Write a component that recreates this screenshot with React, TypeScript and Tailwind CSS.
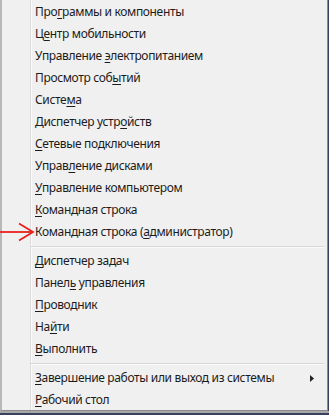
import React from "react";

type Item = { pre: string; key: string; post: string; sub?: boolean };

const group1: Item[] = [
  { pre: "Про", key: "г", post: "раммы и компоненты" },
  { pre: "Ц", key: "е", post: "нтр мобильности" },
  { pre: "Управление ", key: "э", post: "лектропитанием" },
  { pre: "Просмотр соб", key: "ы", post: "тий" },
  { pre: "Систе", key: "м", post: "а" },
  { pre: "Диспетчер устр", key: "о", post: "йств" },
  { pre: "", key: "С", post: "етевые подключения" },
  { pre: "Управ", key: "л", post: "ение дисками" },
  { pre: "", key: "У", post: "правление компьютером" },
  { pre: "", key: "К", post: "омандная строка" },
  { pre: "Командная строка (", key: "а", post: "дминистратор)" },
];
const group2: Item[] = [
  { pre: "", key: "Д", post: "испетчер задач" },
  { pre: "Панел", key: "ь", post: " управления" },
  { pre: "", key: "П", post: "роводник" },
  { pre: "На", key: "й", post: "ти" },
  { pre: "", key: "В", post: "ыполнить" },
];
const group3: Item[] = [
  { pre: "", key: "З", post: "авершение работы или выход из системы", sub: true },
  { pre: "", key: "Р", post: "абочий стол" },
];

function Row({ item }: { item: Item }) {
  return (
    <div className="flex h-[22px] items-center pl-[35px] pr-[12px]">
      <span className="whitespace-pre">
        {item.pre}
        <u className="underline-offset-[2px]">{item.key}</u>
        {item.post}
      </span>
      {item.sub && (
        <svg className="ml-auto mr-[1px]" width="4" height="7" viewBox="0 0 4 7">
          <path d="M0 0 L4 3.5 L0 7 Z" fill="#222" />
        </svg>
      )}
    </div>
  );
}

function Sep() {
  return (
    <div className="flex h-[7px] items-center pl-[31px] pr-[3px]">
      <div className="h-[2px] w-full border-t border-[#d7d7d7] border-b border-b-[#fbfbfb]" />
    </div>
  );
}

export default function App() {
  return (
    <div
      className="relative h-[415px] w-[329px] overflow-hidden bg-[#3a4060] text-[12px] tracking-[-0.35px] text-[#1c1c1c]"
      style={{ fontFamily: '"Noto Sans", "Open Sans", sans-serif' }}
    >
      <div className="absolute left-0 top-[411px] h-[2px] w-[329px] bg-[#a8a8a8]" />
      <div className="relative h-[411px] w-[328px] border-r border-b border-[#8a8a8a] border-l-[2px] border-l-[#b8b8b8] bg-[#f0f0f0] pt-[1px]">
        <div className="absolute left-[28px] top-0 h-full w-[2px] border-l border-[#dcdcdc] border-r border-r-[#fbfbfb]" />
        <div className="relative -ml-[2px] flex flex-col">
          {group1.map((it, i) => (
            <Row key={i} item={it} />
          ))}
          <Sep />
          {group2.map((it, i) => (
            <Row key={i} item={it} />
          ))}
          <Sep />
          {group3.map((it, i) => (
            <Row key={i} item={it} />
          ))}
        </div>
      </div>
      <svg className="absolute left-0 top-[221px]" width="36" height="22" viewBox="0 0 36 22">
        <path d="M0 11 L32 11" stroke="#e8211c" strokeWidth="1.8" fill="none" />
        <path d="M19 2.5 L33 11 L19 19.5" stroke="#e8211c" strokeWidth="1.8" fill="none" strokeLinejoin="miter" />
      </svg>
    </div>
  );
}
